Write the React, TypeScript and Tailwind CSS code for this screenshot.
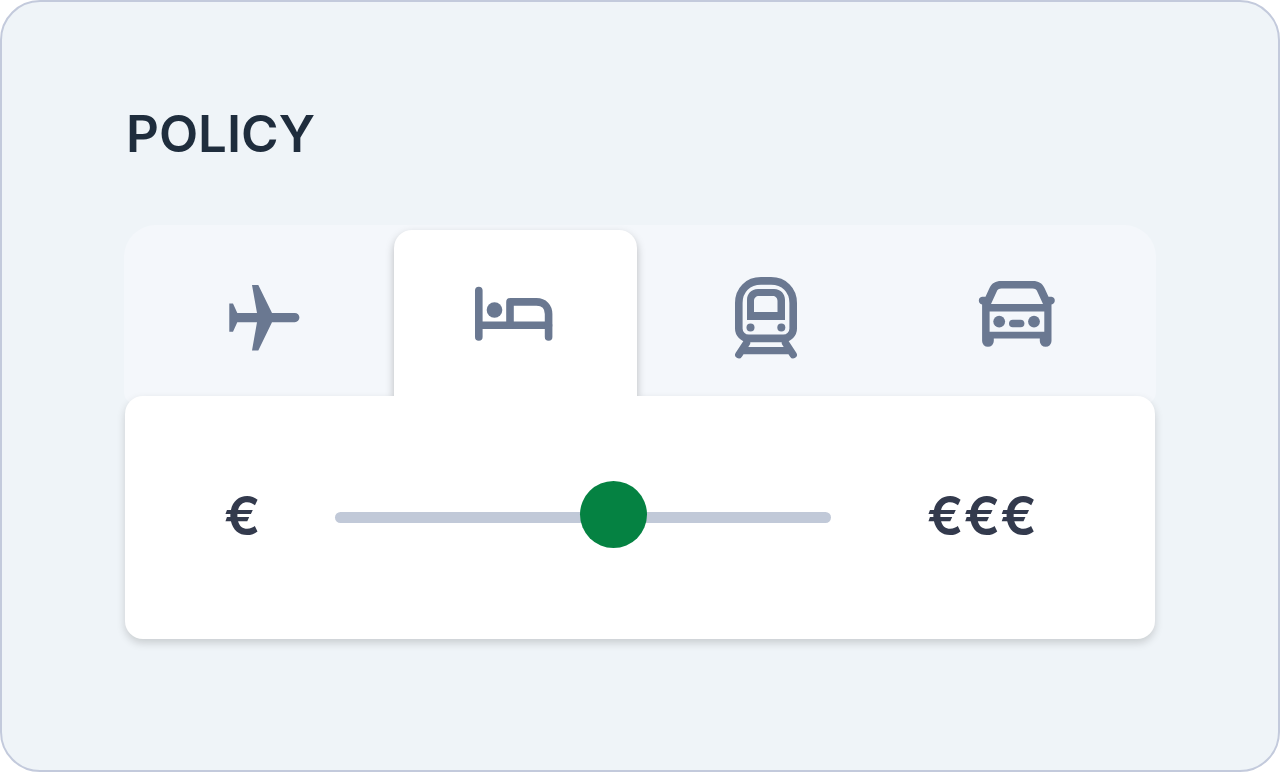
import { useState, type ReactNode } from "react";

function PlaneIcon() {
  return (
    <svg width="100" height="95" viewBox="0 0 100 95" fill="currentColor" aria-hidden="true">
      <path d="M14.3 33.5H18L22.3 43H42L37 15H43.3L57 43H79.8a4.6 4.6 0 0 1 0 9.2H57L43.3 80.5H37L42 52.2H22.3L18 61.7H14.3z" />
    </svg>
  );
}

function BedIcon() {
  return (
    <svg
      width="100"
      height="95"
      viewBox="1 0 100 95"
      fill="none"
      stroke="currentColor"
      strokeWidth="7.6"
      strokeLinecap="round"
      strokeLinejoin="round"
      aria-hidden="true"
    >
      <path d="M13.8 20.5V67M13.8 55.3H83.5" />
      <path d="M45 55V31.9H71.5C79 31.9 83.6 37 83.6 44V67" />
      <circle cx="29.5" cy="40" r="7.8" fill="currentColor" stroke="none" />
    </svg>
  );
}

function TrainIcon() {
  return (
    <svg
      width="100"
      height="95"
      viewBox="-3 0 100 95"
      fill="none"
      stroke="currentColor"
      strokeWidth="7.6"
      strokeLinecap="round"
      aria-hidden="true"
    >
      <path d="M41 10.9H51C64 10.9 73.2 20 73.2 33V58A10 10 0 0 1 63.2 68.4H28.8A10 10 0 0 1 18.8 58V33C18.8 20 28 10.9 41 10.9z" />
      <path
        fill="currentColor"
        stroke="none"
        fillRule="evenodd"
        d="M38 19H54C61 19 65 24 65 30V50H27V30C27 24 31 19 38 19zM39 26C36 26 34 28 34 31V42H57.5V31C57.5 28 55.5 26 52.5 26z"
      />
      <circle cx="30.5" cy="57.4" r="4" fill="currentColor" stroke="none" />
      <circle cx="61.3" cy="57.4" r="4" fill="currentColor" stroke="none" />
      <path d="M26.5 73L18.8 84.7M65.5 73L73.2 84.7M24 80.6H68" strokeWidth="7.4" />
    </svg>
  );
}

function CarIcon() {
  return (
    <svg width="100" height="95" viewBox="3 0 100 95" fill="currentColor" aria-hidden="true">
      <path
        fillRule="evenodd"
        d="M36 11H68C73.5 11 77 13 79.5 18L83.5 26.7H86.5A3.9 3.9 0 0 1 86.5 34.4V71A5.8 5.8 0 0 1 74.8 71V68.5H28.8V71A5.8 5.8 0 0 1 17.1 71V34.4A3.9 3.9 0 0 1 17.1 26.7H20.5L24.5 18C27 13 30.5 11 36 11zM36.5 18.6C34 18.6 32.5 19.5 31.5 22L26 34H78L72.5 22C71.5 19.5 70 18.6 67.5 18.6zM24.6 41.5V61.8H79.3V41.5z"
      />
      <circle cx="34.2" cy="51.6" r="5.9" />
      <circle cx="69" cy="51.6" r="5.9" />
      <rect x="44" y="49.7" width="15.4" height="7.6" rx="3.8" />
    </svg>
  );
}

const tabs: { id: string; label: string; icon: ReactNode }[] = [
  { id: "flights", label: "Flights", icon: <PlaneIcon /> },
  { id: "hotels", label: "Hotels", icon: <BedIcon /> },
  { id: "trains", label: "Trains", icon: <TrainIcon /> },
  { id: "cars", label: "Cars", icon: <CarIcon /> },
];

export default function App() {
  const [active, setActive] = useState("hotels");
  const [budget, setBudget] = useState(57);

  return (
    <main className="rounded-[40px] border-2 border-[#c3cadc] bg-[#eff4f8] px-[122px] pt-[98px] pb-[131px] font-['Inter',sans-serif]">
      <h1 className="pl-0.5 text-[51px] leading-[68px] font-semibold text-[#1f2d3d]">POLICY</h1>

      <section className="mt-[57px]">
        <div
          role="tablist"
          aria-label="Travel type"
          className="grid grid-cols-4 gap-2 rounded-t-[32px] rounded-b-xl bg-[#f4f7fb] pt-[5px] pr-[17px] pb-2 pl-[19px]"
        >
          {tabs.map((tab) => (
            <button
              key={tab.id}
              id={`tab-${tab.id}`}
              type="button"
              role="tab"
              aria-label={tab.label}
              aria-selected={active === tab.id}
              aria-controls="policy-panel"
              onClick={() => setActive(tab.id)}
              className={
                active === tab.id
                  ? "z-10 flex justify-center rounded-t-[18px] bg-white pt-10 pb-[31px] text-[#6a7891] shadow-[0_4px_8px_rgba(0,0,0,0.25)] [clip-path:inset(-16px_-16px_0_-16px)]"
                  : "flex justify-center rounded-t-[18px] pt-10 pb-[31px] text-[#6a7891]"
              }
            >
              {tab.icon}
            </button>
          ))}
        </div>

        <div
          id="policy-panel"
          role="tabpanel"
          aria-labelledby={`tab-${active}`}
          className="relative mx-px -mt-2 flex h-[243px] items-center rounded-[18px] bg-white pr-[118px] pl-[99px] text-[54px] leading-[68px] font-semibold text-[#333a4d] shadow-[0_4px_8px_rgba(0,0,0,0.16)]"
        >
          <span className="w-[111px] pb-1">€</span>
          <input
            type="range"
            min={0}
            max={100}
            value={budget}
            onChange={(event) => setBudget(Number(event.target.value))}
            aria-label="Budget level"
            className="h-[68px] min-w-0 flex-1 cursor-pointer appearance-none bg-transparent [&::-webkit-slider-runnable-track]:h-[11px] [&::-webkit-slider-runnable-track]:rounded-full [&::-webkit-slider-runnable-track]:bg-[#c1c9d8] [&::-webkit-slider-thumb]:-mt-[31px] [&::-webkit-slider-thumb]:size-[67px] [&::-webkit-slider-thumb]:appearance-none [&::-webkit-slider-thumb]:rounded-full [&::-webkit-slider-thumb]:bg-[#058242]"
          />
          <span className="ml-24 pb-1">€€€</span>
        </div>
      </section>
    </main>
  );
}
